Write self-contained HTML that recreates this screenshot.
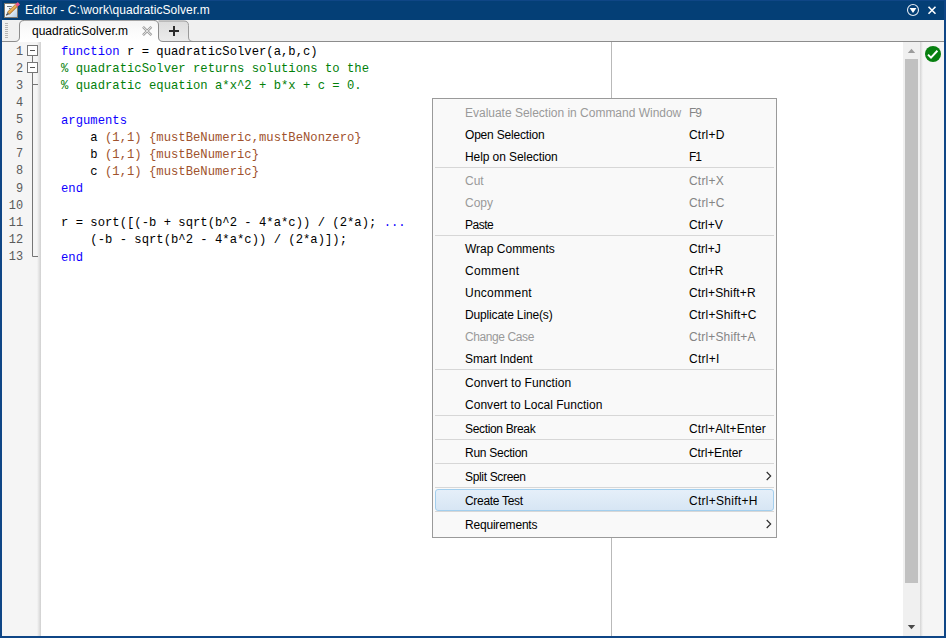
<!DOCTYPE html>
<html>
<head>
<meta charset="utf-8">
<title>Editor - C:\work\quadraticSolver.m</title>
<style>
html,body{margin:0;padding:0;}
body{width:946px;height:638px;overflow:hidden;background:#0f4686;position:relative;font-family:"Liberation Sans",sans-serif;}
#win{position:absolute;left:0;top:0;width:946px;height:638px;background:#0f4686;}
#title{position:absolute;left:0;top:0;width:946px;height:20px;background:#0f4686;color:#fff;}
#title .in{position:absolute;left:2px;top:1px;width:942px;height:19px;background:#043f76;}
#title .txt{position:absolute;left:25px;top:3px;font-size:12px;line-height:14px;white-space:nowrap;letter-spacing:0.08px;}
#tabs{position:absolute;left:2px;top:20px;width:942px;height:22px;background:#f0f0f0;}
#tabs svg{position:absolute;left:0;top:0;}
#tabtxt{position:absolute;left:32px;top:23px;font-size:12px;line-height:16px;color:#000;white-space:nowrap;}
#gutter{position:absolute;left:2px;top:42px;width:39px;height:594px;background:#f5f5f5;}
#gutter .sh{position:absolute;right:0;top:0;width:4px;height:100%;background:linear-gradient(to right,#f5f5f5,#d0d0d0);}
#code{position:absolute;left:41px;top:42px;width:862px;height:594px;background:#fff;}
#vline{position:absolute;left:611px;top:42px;width:1px;height:594px;background:#b9b9b9;}
#sb{position:absolute;left:903px;top:42px;width:17px;height:594px;background:#f0f0f0;}
#thumb{position:absolute;left:905px;top:59px;width:13px;height:524px;background:#c1c1c1;}
#msg{position:absolute;left:920px;top:42px;width:24px;height:594px;background:#f5f5f5;}
#msg .sh{position:absolute;left:0;top:0;width:3px;height:100%;background:linear-gradient(to right,#d4d4d4,#f5f5f5);}
.ln{position:absolute;left:2px;width:21.3px;text-align:right;font-family:"Liberation Mono",monospace;font-size:11.9px;letter-spacing:0.15px;line-height:17px;color:#5a5a5a;white-space:pre;}
.cl{position:absolute;left:61px;font-family:"Liberation Mono",monospace;font-size:12.2px;letter-spacing:0.02px;line-height:17px;color:#000;white-space:pre;}
.k{color:#0e00ff;}
.c{color:#028009;}
.v{color:#a0522d;}
#menu{position:absolute;left:432px;top:98px;width:343px;height:438px;background:#f9f9f9;border:1px solid #9a9a9a;}
.mi{position:absolute;left:2px;width:339px;height:22px;font-size:12px;line-height:24px;color:#000;white-space:nowrap;}
.mi .l{position:absolute;left:30px;top:0;}
.mi .s{position:absolute;left:254px;top:0;}
.mi.d{color:#9a9a9a;}
.mi.d .s{color:#858585;}
.sep{position:absolute;left:2px;width:339px;height:1px;background:#d7d7d7;}
.mi.h{background:linear-gradient(to bottom,#e5eff9,#d7e6f4);border:1px solid #a3cfee;box-sizing:border-box;border-radius:3px;line-height:22px;}
.mi.h .l{left:29px;}
.mi.h .s{left:253px;}
.arr{position:absolute;left:331px;top:6px;}
</style>
</head>
<body>
<div id="win">
<div id="title"><div class="in"></div><svg width="946" height="20" viewBox="0 0 946 20" style="position:absolute;left:0;top:0">
<defs><linearGradient id="pp" x1="0" y1="0" x2="1" y2="1"><stop offset="0" stop-color="#ffffff"/><stop offset="0.450" stop-color="#f1f5f9"/><stop offset="1" stop-color="#aecbe6"/></linearGradient></defs>
<rect x="4.500" y="3.500" width="13" height="14" fill="url(#pp)" stroke="#80786e" stroke-width="1"/>
<path d="M7 6.500 H11.700 M9 8.500 H10.500" stroke="#70757c" stroke-width="1"/>
<path d="M7.400 12.050 L15.300 4.450 L17.500 6.750 L9.600 14.350 Z" fill="#d8953a" stroke="#8f5f22" stroke-width="0.500"/>
<path d="M8.300 13 L16.200 5.400" stroke="#f4cf7c" stroke-width="0.900" fill="none"/>
<path d="M15.300 4.450 L17.800 2.100 L20 4.400 L17.500 6.750 Z" fill="#e9528b"/>
<path d="M6.200 15.400 L7.400 12.050 L9.600 14.350 Z" fill="#6a6a6a"/>
<path d="M6.200 15.400 L6.700 14 L7.700 15 Z" fill="#111"/>
<circle cx="913" cy="10" r="5.500" fill="none" stroke="#e6ecf3" stroke-width="1.100"/>
<path d="M909.600 7.900 H916.400 L913 12.900 Z" fill="#ffffff"/>
<path d="M928.500 6.800 L935.500 13.800 M935.500 6.800 L928.500 13.800" stroke="#ffffff" stroke-width="1.600" fill="none"/>
</svg><span class="txt">Editor - C:\work\quadraticSolver.m</span></div>
<div id="tabs"><svg width="942" height="22" viewBox="0 0 942 22">
<defs>
<linearGradient id="tg" x1="0" y1="0" x2="0" y2="1"><stop offset="0" stop-color="#f4f4f4"/><stop offset="0.5" stop-color="#fbfbfb"/><stop offset="1" stop-color="#ffffff"/></linearGradient>
<linearGradient id="pg" x1="0" y1="0" x2="0" y2="1"><stop offset="0" stop-color="#dcdcdc"/><stop offset="1" stop-color="#ececec"/></linearGradient>
</defs>
<path d="M156.5 1 H182 Q186.500 1 186.5 5.500 V17 Q186.500 21.5 191 21.5 H156.5 Z" fill="url(#pg)"/>
<path d="M156.5 1 H182 Q186.500 1 186.5 5.500 V17 Q186.500 21.5 191 21.5" fill="none" stroke="#9a9a9a" stroke-width="1"/>
<path d="M0 22 V21.500 H13 Q17.500 21.5 17.5 17 V5 Q17.500 0.500 22 0.500 H152 Q156.500 0.500 156.5 5 V17 Q156.500 21.5 161 21.5 H942 V22 Z" fill="url(#tg)"/>
<path d="M0 21.500 H13 Q17.500 21.5 17.5 17 V5 Q17.500 0.500 22 0.500" fill="none" stroke="#8c8c8c" stroke-width="1"/>
<path d="M22 0.500 H152" fill="none" stroke="#a4a4a4" stroke-width="1"/>
<path d="M152 0.500 Q156.500 0.500 156.5 5 V17 Q156.500 21.5 161 21.5 H942" fill="none" stroke="#8c8c8c" stroke-width="1"/>
<g fill="#b4b4b4"><rect x="3" y="3" width="3" height="1"/><rect x="3" y="5" width="3" height="1"/><rect x="3" y="7" width="3" height="1"/><rect x="3" y="9" width="3" height="1"/><rect x="3" y="11" width="3" height="1"/><rect x="3" y="13" width="3" height="1"/><rect x="3" y="15" width="3" height="1"/><rect x="3" y="17" width="3" height="1"/></g>
<path d="M141 6.800 L149.400 15.200 M149.400 6.800 L141 15.200" stroke="#9c9c9c" stroke-width="2.500" fill="none"/>
<path d="M141.300 7.100 L149.100 14.900 M149.100 7.100 L141.300 14.900" stroke="#f6f6f6" stroke-width="0.900" fill="none"/>
<path d="M167 11 H177 M172 6 V16" stroke="#2c2c2c" stroke-width="2" fill="none"/>
</svg></div>
<div id="tabtxt">quadraticSolver.m</div>
<div id="gutter"><div class="sh"></div></div>
<div id="code"></div>
<div id="vline"></div>
<div id="sb"></div>
<div id="thumb"></div>
<div id="msg"><div class="sh"></div></div>

<svg width="946" height="638" viewBox="0 0 946 638" style="position:absolute;left:0;top:0;pointer-events:none">
<path d="M32.500 56 V256.500 H38" fill="none" stroke="#767676" stroke-width="1"/>
<path d="M33 84.500 H38" fill="none" stroke="#767676" stroke-width="1"/>
<rect x="27.500" y="45.500" width="10" height="10" fill="#ffffff" stroke="#767676" stroke-width="1"/>
<rect x="27.500" y="62.500" width="10" height="10" fill="#ffffff" stroke="#767676" stroke-width="1"/>
<path d="M30 50.500 H35 M30 67.500 H35" stroke="#555" stroke-width="1"/>
<path d="M907.800 53 L911.500 48.800 L915.200 53 Z" fill="#9c9c9c"/>
<path d="M907.800 625 L911.500 629.200 L915.200 625 Z" fill="#484848"/>
<circle cx="933" cy="54" r="8" fill="#078010"/>
<path d="M928 54.600 L931 57.600 L937.400 50.800" fill="none" stroke="#ffffff" stroke-width="2"/>
</svg>
<div class="ln" style="top:44px">1</div>
<div class="ln" style="top:61px">2</div>
<div class="ln" style="top:78px">3</div>
<div class="ln" style="top:95px">4</div>
<div class="ln" style="top:112px">5</div>
<div class="ln" style="top:129px">6</div>
<div class="ln" style="top:146px">7</div>
<div class="ln" style="top:163px">8</div>
<div class="ln" style="top:181px">9</div>
<div class="ln" style="top:198px">10</div>
<div class="ln" style="top:215px">11</div>
<div class="ln" style="top:232px">12</div>
<div class="ln" style="top:249px">13</div>

<div class="cl" style="top:44px"><span class="k">function</span> r = quadraticSolver(a,b,c)</div>
<div class="cl c" style="top:61px">% quadraticSolver returns solutions to the</div>
<div class="cl c" style="top:78px">% quadratic equation a*x^2 + b*x + c = 0.</div>
<div class="cl k" style="top:113px">arguments</div>
<div class="cl" style="top:130px">    a <span class="v">(1,1) {mustBeNumeric,mustBeNonzero}</span></div>
<div class="cl" style="top:147px">    b <span class="v">(1,1) {mustBeNumeric}</span></div>
<div class="cl" style="top:164px">    c <span class="v">(1,1) {mustBeNumeric}</span></div>
<div class="cl k" style="top:181px">end</div>
<div class="cl" style="top:215px">r = sort([(-b + sqrt(b^2 - 4*a*c)) / (2*a); <span class="k">...</span></div>
<div class="cl" style="top:232px">    (-b - sqrt(b^2 - 4*a*c)) / (2*a)]);</div>
<div class="cl k" style="top:250px">end</div>

<div id="menu">
<div class="mi d" style="top:2px"><span class="l" style="letter-spacing:-0.014px">Evaluate Selection in Command Window</span><span class="s" style="letter-spacing:-1.000px">F9</span></div>
<div class="mi" style="top:24px"><span class="l" style="letter-spacing:-0.192px">Open Selection</span><span class="s" style="letter-spacing:0.200px">Ctrl+D</span></div>
<div class="mi" style="top:46px"><span class="l" style="letter-spacing:-0.081px">Help on Selection</span><span class="s" style="letter-spacing:-1.000px">F1</span></div>
<div class="sep" style="top:68px"></div>
<div class="mi d" style="top:70px"><span class="l">Cut</span><span class="s" style="letter-spacing:0.200px">Ctrl+X</span></div>
<div class="mi d" style="top:92px"><span class="l">Copy</span><span class="s" style="letter-spacing:0.200px">Ctrl+C</span></div>
<div class="mi" style="top:114px"><span class="l" style="letter-spacing:-0.500px">Paste</span><span class="s">Ctrl+V</span></div>
<div class="sep" style="top:136px"></div>
<div class="mi" style="top:138px"><span class="l">Wrap Comments</span><span class="s">Ctrl+J</span></div>
<div class="mi" style="top:160px"><span class="l" style="letter-spacing:0.333px">Comment</span><span class="s">Ctrl+R</span></div>
<div class="mi" style="top:182px"><span class="l" style="letter-spacing:0.250px">Uncomment</span><span class="s" style="letter-spacing:0.109px">Ctrl+Shift+R</span></div>
<div class="mi" style="top:204px"><span class="l" style="letter-spacing:-0.150px">Duplicate Line(s)</span><span class="s" style="letter-spacing:0.182px">Ctrl+Shift+C</span></div>
<div class="mi d" style="top:226px"><span class="l" style="letter-spacing:-0.400px">Change Case</span><span class="s" style="letter-spacing:0.155px">Ctrl+Shift+A</span></div>
<div class="mi" style="top:248px"><span class="l" style="letter-spacing:-0.091px">Smart Indent</span><span class="s" style="letter-spacing:0.280px">Ctrl+I</span></div>
<div class="sep" style="top:270px"></div>
<div class="mi" style="top:272px"><span class="l" style="letter-spacing:0.083px">Convert to Function</span></div>
<div class="mi" style="top:294px"><span class="l" style="letter-spacing:0.029px">Convert to Local Function</span></div>
<div class="sep" style="top:316px"></div>
<div class="mi" style="top:318px"><span class="l" style="letter-spacing:-0.333px">Section Break</span><span class="s" style="letter-spacing:0.115px">Ctrl+Alt+Enter</span></div>
<div class="sep" style="top:340px"></div>
<div class="mi" style="top:342px"><span class="l" style="letter-spacing:-0.260px">Run Section</span><span class="s" style="letter-spacing:-0.111px">Ctrl+Enter</span></div>
<div class="sep" style="top:364px"></div>
<div class="mi" style="top:366px"><span class="l" style="letter-spacing:-0.336px">Split Screen</span><svg class="arr" width="6" height="10" viewBox="0 0 6 10"><path d="M0.700 1 L4.700 5 L0.700 9" fill="none" stroke="#2a2a2a" stroke-width="1.100"/></svg></div>
<div class="sep" style="top:388px"></div>
<div class="mi h" style="top:390px"><span class="l" style="letter-spacing:-0.300px">Create Test</span><span class="s" style="letter-spacing:0.273px">Ctrl+Shift+H</span></div>
<div class="sep" style="top:412px"></div>
<div class="mi" style="top:414px"><span class="l" style="letter-spacing:-0.200px">Requirements</span><svg class="arr" width="6" height="10" viewBox="0 0 6 10"><path d="M0.700 1 L4.700 5 L0.700 9" fill="none" stroke="#2a2a2a" stroke-width="1.100"/></svg></div>
</div>
</div>
</body>
</html>
